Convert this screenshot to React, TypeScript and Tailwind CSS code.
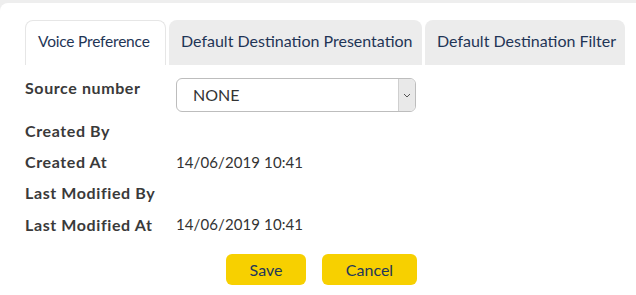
import React from 'react';

const rows = [
    { label: 'Created By', value: '' },
    { label: 'Created At', value: '14/06/2019 10:41' },
    { label: 'Last Modified By', value: '' },
    { label: 'Last Modified At', value: '14/06/2019 10:41' },
];

const tabs = [
    { title: 'Voice Preference', w: 'w-[141px] tracking-[-0.2px]' },
    { title: 'Default Destination Presentation', w: 'w-[253px]' },
    { title: 'Default Destination Filter', w: 'w-[200px]' },
];

const App = () => {
    return (
        <div className="w-[636px] h-[295px] bg-[#eeeeee] pt-[3px] overflow-hidden" style={{ fontFamily: 'Lato, "Open Sans", sans-serif' }}>
            <div className="h-[300px] bg-white rounded-l-lg pl-[25px] pt-[17px]">
                <div className="flex gap-[3px] h-[45px]">
                    {tabs.map((t, i) => (
                        <div
                            key={t.title}
                            className={
                                t.w +
                                (i === 0
                                    ? ' pl-[12px] pt-[9px] text-[15.5px] text-[#1f3556] bg-white border border-b-0 border-[#e6e6e6] rounded-t-lg'
                                    : ' pl-[12px] pt-[9px] text-[16px] text-[#1f3556] bg-[#ececec] rounded-t-lg')
                            }
                        >
                            {t.title}
                        </div>
                    ))}
                </div>

                <div className="flex items-center mt-[13px] h-[34px]">
                    <div className="w-[151px] font-bold text-[16px] tracking-[0.6px] text-[#3a3a3a] -mt-[14px]">Source number</div>
                    <div className="w-[240px] h-[34px] flex border border-[#bdbdbd] rounded-md overflow-hidden">
                        <div className="flex-1 pl-[16px] flex items-center text-[16px] text-[#333]">NONE</div>
                        <div className="w-[17px] bg-[#e9e9e9] border-l border-[#cfcfcf] flex items-center justify-center">
                            <svg width="8" height="5" viewBox="0 0 8 5" fill="none">
                                <path d="M1 1l3 3 3-3" stroke="#555" strokeWidth="1" />
                            </svg>
                        </div>
                    </div>
                </div>

                <div className="flex flex-col mt-[3px]">
                    {rows.map((r) => (
                        <div key={r.label} className="flex items-center h-[31.3px]">
                            <div className="w-[151px] font-bold text-[16px] tracking-[0.6px] text-[#3a3a3a]">{r.label}</div>
                            <div className="text-[15px] tracking-[0.1px] text-[#333]">{r.value}</div>
                        </div>
                    ))}
                </div>

                <div className="flex gap-[16px] ml-[201px] mt-[14px]">
                    <button className="w-[80px] h-[31px] bg-[#f7d000] rounded-md text-[16px] text-[#23375a]">Save</button>
                    <button className="w-[95px] h-[31px] bg-[#f7d000] rounded-md text-[16px] text-[#23375a]">Cancel</button>
                </div>
            </div>
        </div>
    );
};

export default App;
